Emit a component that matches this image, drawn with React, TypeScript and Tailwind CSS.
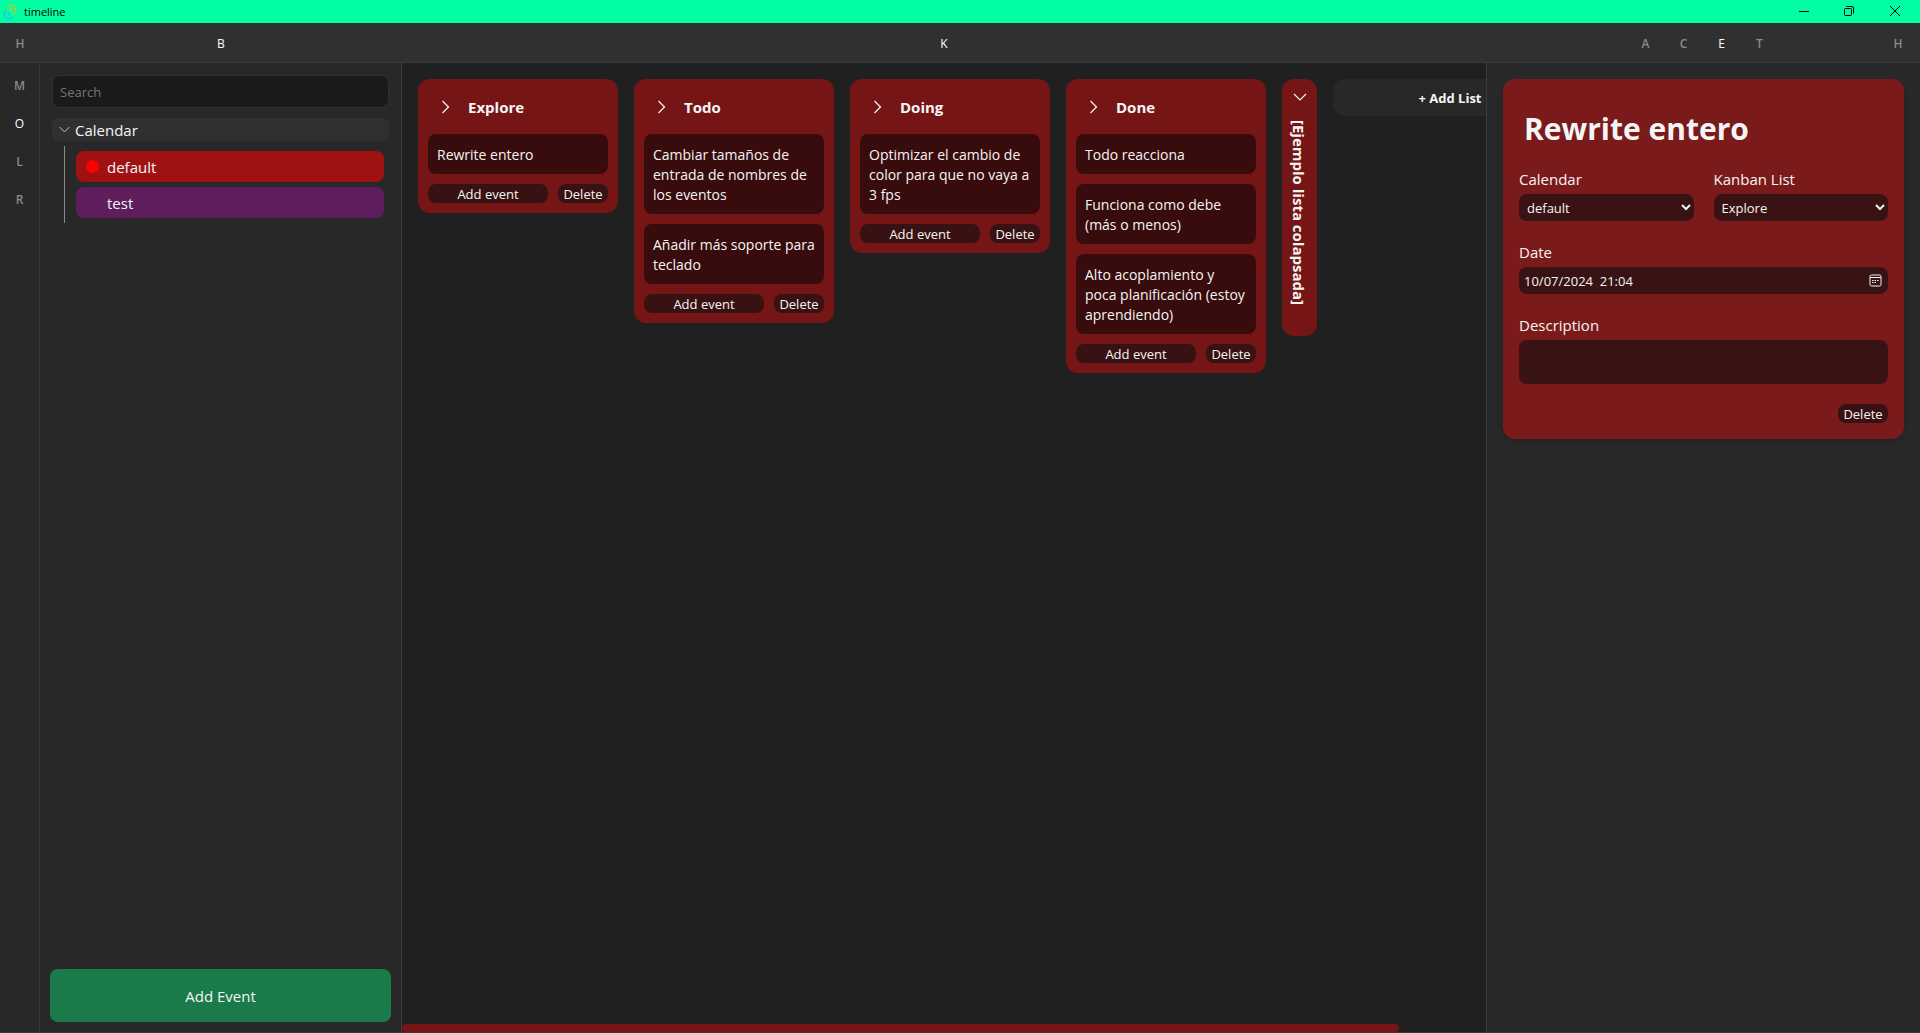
import React from "react";

type Kanban = { name: string; events: string[] };

const lists: Kanban[] = [
  { name: "Explore", events: ["Rewrite entero"] },
  {
    name: "Todo",
    events: [
      "Cambiar tamaños de entrada de nombres de los eventos",
      "Añadir más soporte para teclado",
    ],
  },
  { name: "Doing", events: ["Optimizar el cambio de color para que no vaya a 3 fps"] },
  {
    name: "Done",
    events: [
      "Todo reacciona",
      "Funciona como debe (más o menos)",
      "Alto acoplamiento y poca planificación (estoy aprendiendo)",
    ],
  },
];

function Chevron({ down = false, className = "h-4 w-4" }: { down?: boolean; className?: string }) {
  return (
    <svg
      viewBox="0 0 16 16"
      className={`shrink-0 ${className}`}
      fill="none"
      stroke="currentColor"
      strokeWidth="1.2"
      aria-hidden="true"
    >
      <path d={down ? "M2 5l6 6 6-6" : "M4.500 2l6 6-6 6"} />
    </svg>
  );
}

function Letter({ children, active = false }: { children: string; active?: boolean }) {
  return (
    <button
      type="button"
      className={`flex h-[38px] w-[38px] shrink-0 items-center justify-center text-xs ${
        active ? "font-medium text-white" : "font-semibold text-[#8a8a8a]"
      }`}
    >
      {children}
    </button>
  );
}

function SmallButton({ children, className = "" }: { children: string; className?: string }) {
  return (
    <button
      type="button"
      className={`flex h-[19px] items-center justify-center rounded-lg bg-[#381212] pt-[2px] text-[13px] leading-[17px] ${className}`}
    >
      {children}
    </button>
  );
}

function TitleBar() {
  return (
    <header className="flex h-[23px] shrink-0 items-center bg-[#00ffa2] text-black">
      <svg viewBox="0 0 16 16" className="ml-[2px] h-4 w-4" fill="none" strokeWidth="1.8" aria-hidden="true">
        <path d="M5.2 3.4A4.600 4.600 0 1 1 10.8 10" stroke="#b4c832" />
        <circle cx="9" cy="5.8" r="1.300" fill="#e0b830" />
        <path d="M10.800 12.600A4.600 4.600 0 1 1 5.200 6" stroke="#24c8d8" />
        <circle cx="7" cy="10.200" r="1.300" fill="#24c8d8" />
      </svg>
      <span className="ml-[6px] pt-px text-[11px]">timeline</span>
      <div className="ml-auto flex h-full pb-[2px]">
        <button type="button" aria-label="Minimize" className="flex w-[45px] items-center justify-center">
          <svg viewBox="0 0 10 10" className="h-[10px] w-[10px]" stroke="currentColor" aria-hidden="true">
            <path d="M0 5.5h10" />
          </svg>
        </button>
        <button type="button" aria-label="Restore" className="flex w-[45px] items-center justify-center">
          <svg viewBox="0 0 10 10" className="h-[10px] w-[10px]" fill="none" stroke="currentColor" aria-hidden="true">
            <rect x="0.5" y="2.5" width="7" height="7" rx="1" />
            <path d="M2.5 0.5H8A1.5 1.5 0 0 1 9.500 2V7.500" />
          </svg>
        </button>
        <button type="button" aria-label="Close" className="mr-[2px] flex w-[47px] items-center justify-center">
          <svg viewBox="0 0 10 10" className="h-[10px] w-[10px]" stroke="currentColor" aria-hidden="true">
            <path d="M0 0l10 10M10 0L0 10" />
          </svg>
        </button>
      </div>
    </header>
  );
}

function TopBar() {
  return (
    <nav className="flex h-10 shrink-0 items-center border-b border-[#3a3a3a] bg-[#303030] pt-[2px]">
      <div className="flex w-10 justify-center">
        <Letter>H</Letter>
      </div>
      <div className="flex w-[362px] justify-center">
        <Letter active>B</Letter>
      </div>
      <div className="flex flex-1 justify-center">
        <Letter active>K</Letter>
      </div>
      <div className="flex w-[434px] items-center pr-[3px]">
        <div className="w-10" />
        <div className="flex flex-1 justify-center">
          <Letter>A</Letter>
          <Letter>C</Letter>
          <Letter active>E</Letter>
          <Letter>T</Letter>
        </div>
        <Letter>H</Letter>
      </div>
    </nav>
  );
}

function Sidebar() {
  return (
    <aside className="flex w-[362px] shrink-0 flex-col border-r border-[#3a3a3a] bg-[#282828]">
      <div className="flex flex-col px-3 pt-3">
        <input
          type="search"
          aria-label="Search"
          placeholder="Search"
          className="h-[33px] rounded-lg border border-[#303030] bg-[#1a1a1a] px-[7px] text-[13px] placeholder:text-[#757575]"
        />
        <button
          type="button"
          aria-expanded="true"
          className="mt-[10px] flex h-[23px] items-center rounded-md bg-[#303030] pl-[6px] text-[15px]"
        >
          <Chevron down className="mr-1 h-[13px] w-[13px] text-[#c8c8c8]" />
          <span className="pt-[2px]">Calendar</span>
        </button>
        <ul className="mt-[5px] ml-3 flex flex-col gap-[5px] border-l border-[#8a8a8a] py-[5px] pr-[5px] pl-[11px]">
          <li>
            <button type="button" className="flex h-[31px] w-full items-center rounded-lg bg-[#a01212] pl-[10px] text-[15px]">
              <span className="mr-2 h-[13px] w-[13px] rounded-full bg-[#ff0000]" />
              <span className="pt-[2px]">default</span>
            </button>
          </li>
          <li>
            <button type="button" className="flex h-[31px] w-full items-center rounded-lg bg-[#5e1e5e] pt-[2px] pl-[31px] text-[15px]">
              test
            </button>
          </li>
        </ul>
      </div>
      <button type="button" className="mx-[10px] mt-auto mb-[10px] h-[53px] rounded-lg bg-[#1a7a4a] pt-[2px] text-[15px]">
        Add Event
      </button>
    </aside>
  );
}

function ListCard({ list }: { list: Kanban }) {
  return (
    <section className="w-[200px] shrink-0 rounded-xl bg-[#751515] p-[10px]">
      <header className="flex h-[45px] items-center pb-[10px] pl-[10px]">
        <button type="button" aria-label={`Collapse ${list.name}`}>
          <Chevron />
        </button>
        <h2 className="ml-[14px] pt-[2px] text-[15px] font-bold">{list.name}</h2>
      </header>
      <div className="flex flex-col gap-[10px]">
        {list.events.map((event) => (
          <button
            key={event}
            type="button"
            className="rounded-lg bg-[#380b0c] pt-[11px] pr-[7px] pb-[9px] pl-[9px] text-left text-sm leading-5"
          >
            {event}
          </button>
        ))}
      </div>
      <footer className="mt-[10px] flex gap-[10px]">
        <SmallButton className="flex-1">Add event</SmallButton>
        <SmallButton className="w-[50px]">Delete</SmallButton>
      </footer>
    </section>
  );
}

function Board() {
  return (
    <main className="flex min-w-0 flex-1 flex-col bg-[#202020]">
      <div className="flex flex-1 items-start gap-4 overflow-hidden p-4">
        {lists.map((list) => (
          <ListCard key={list.name} list={list} />
        ))}
        <section className="flex h-[257px] w-[35px] shrink-0 flex-col items-center rounded-xl bg-[#751515] pt-[10px]">
          <button type="button" aria-label="Expand list">
            <Chevron down />
          </button>
          <h2 className="mt-[15px] pr-[2px] text-[15px] leading-5 font-bold whitespace-nowrap [writing-mode:vertical-rl]">
            [Ejemplo lista colapsada]
          </h2>
        </section>
        <button type="button" className="h-[37px] w-[234px] shrink-0 rounded-xl bg-[#282828] pt-[2px] text-[13px] font-bold">
          + Add List
        </button>
      </div>
      <div className="h-2 w-[92%] rounded-full bg-[#751515]" />
    </main>
  );
}

const field = "h-[27px] w-full rounded-lg bg-[#391313] text-[13px]";

function Details() {
  return (
    <aside className="w-[434px] shrink-0 border-l border-[#3a3a3a] bg-[#282828] p-4">
      <form className="flex flex-col rounded-xl bg-[#7a1a1a] p-4 shadow-md">
        <h1 className="mt-[14px] mb-[18px] pl-[5px] text-[30px] leading-10 font-bold">Rewrite entero</h1>
        <div className="flex gap-5">
          <div className="flex-1">
            <label htmlFor="calendar" className="mb-[3px] block text-[15px] leading-6">
              Calendar
            </label>
            <select id="calendar" className={`${field} px-1`}>
              <option>default</option>
              <option>test</option>
            </select>
          </div>
          <div className="flex-1">
            <label htmlFor="list" className="mb-[3px] block text-[15px] leading-6">
              Kanban List
            </label>
            <select id="list" className={`${field} px-1`}>
              {lists.map((list) => (
                <option key={list.name}>{list.name}</option>
              ))}
            </select>
          </div>
        </div>
        <label htmlFor="date" className="mt-[19px] mb-[3px] block text-[15px] leading-6">
          Date
        </label>
        <div className={`${field} flex items-center pr-[6px]`}>
          <input id="date" type="text" defaultValue="10/07/2024  21:04" className="min-w-0 flex-1 bg-transparent pt-[2px] pl-[5px]" />
          <button type="button" aria-label="Open calendar">
            <svg viewBox="0 0 13 13" className="h-[13px] w-[13px]" fill="none" stroke="currentColor" aria-hidden="true">
              <rect x="1" y="1" width="11" height="11" rx="1.500" />
              <path d="M1 3.500h11" />
              <path d="M5.500 6.500h1.500M8 6.500h1.500M3 8.500h1.500M5.500 8.500h1.500M3 6.500h1.500" strokeWidth="1.200" />
            </svg>
          </button>
        </div>
        <label htmlFor="description" className="mt-[19px] mb-[3px] block text-[15px] leading-6">
          Description
        </label>
        <textarea id="description" className="h-11 w-full resize-none rounded-lg bg-[#391313] p-2 text-[13px]" />
        <SmallButton className="mt-5 w-[50px] self-end">Delete</SmallButton>
      </form>
    </aside>
  );
}

export default function App() {
  return (
    <div className="flex h-screen flex-col overflow-hidden border-b border-[#3a3a3a] bg-[#202020] font-['Segoe_UI','Open_Sans',sans-serif] text-[#f5f5f5]">
      <TitleBar />
      <TopBar />
      <div className="flex min-h-0 flex-1">
        <nav className="flex w-10 shrink-0 flex-col items-center border-r border-[#3a3a3a] bg-[#282828] pt-1">
          <Letter>M</Letter>
          <Letter active>O</Letter>
          <Letter>L</Letter>
          <Letter>R</Letter>
        </nav>
        <Sidebar />
        <Board />
        <Details />
      </div>
    </div>
  );
}
